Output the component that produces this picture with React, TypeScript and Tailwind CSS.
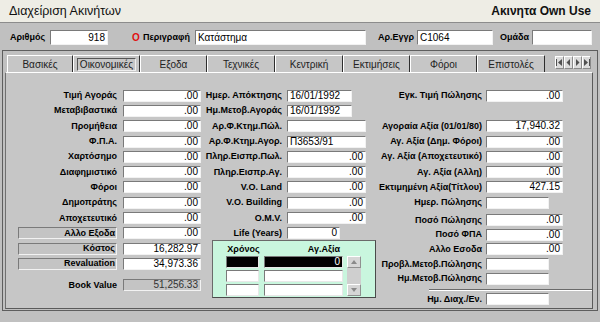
import React from 'react'

const sunken = 'border border-t-[#7a7a7a] border-l-[#7a7a7a] border-b-[#f2f2f2] border-r-[#f2f2f2]'

function Field({ value = '', w, align = 'right', h = 'h-[12px]', bg = 'bg-white', color = 'text-black' }: { value?: string; w: string; align?: 'left' | 'right'; h?: string; bg?: string; color?: string }) {
  return (
    <div className={`${w} ${h} ${bg} ${sunken} flex items-center px-[2px] text-[10px] leading-none ${color} ${align === 'right' ? 'justify-end' : 'justify-start'}`}>
      {value}
    </div>
  )
}

function Label({ text, w, boxed = false }: { text: string; w: string; boxed?: boolean }) {
  if (boxed) {
    return (
      <div className={`${w} flex justify-end`}>
        <div className={`w-[99px] h-[12px] bg-[#c4c4c4] ${sunken} flex items-center justify-end pr-[1px] text-[9px] font-bold leading-none`}>{text}</div>
      </div>
    )
  }
  return <div className={`${w} text-right text-[9px] font-bold leading-none whitespace-nowrap`}>{text}</div>
}

const leftRows: [string, string, boolean?][] = [
  ['Τιμή Αγοράς', '.00'],
  ['Μεταβιβαστικά', '.00'],
  ['Προμήθεια', '.00'],
  ['Φ.Π.Α.', '.00'],
  ['Χαρτόσημο', '.00'],
  ['Διαφημιστικό', '.00'],
  ['Φόροι', '.00'],
  ['Δημοπράτης', '.00'],
  ['Αποχετευτικό', '.00'],
  ['Αλλο Εξοδα', '.00', true],
  ['Κόστος', '16,282.97', true],
  ['Revaluation', '34,973.36', true],
]

const midRows: [string, string, 'left' | 'right', string][] = [
  ['Ημερ. Απόκτησης', '16/01/1992', 'left', 'w-[65px]'],
  ['Ημ.Μετοβ.Αγοράς', '16/01/1992', 'left', 'w-[65px]'],
  ['Αρ.Φ.Κτημ.Πώλ.', '', 'left', 'w-[79px]'],
  ['Αρ.Φ.Κτημ.Αγορ.', 'Π3653/91', 'left', 'w-[79px]'],
  ['Πληρ.Εισπρ.Πωλ.', '.00', 'right', 'w-[79px]'],
  ['Πληρ.Εισπρ.Αγ.', '.00', 'right', 'w-[79px]'],
  ['V.O. Land', '.00', 'right', 'w-[79px]'],
  ['V.O. Building', '.00', 'right', 'w-[79px]'],
  ['O.M.V.', '.00', 'right', 'w-[79px]'],
  ['Life (Years)', '0', 'right', 'w-[53px]'],
]

const rightTop: [string, string | null, string][] = [
  ['Εγκ. Τιμή Πώλησης', '.00', 'w-[77px]'],
  ['', null, ''],
  ['Αγοραία Αξία (01/01/80)', '17,940.32', 'w-[77px]'],
  ['Αγ. Αξία (Δημ. Φόροι)', '.00', 'w-[77px]'],
  ['Αγ. Αξία (Αποχετευτικό)', '.00', 'w-[77px]'],
  ['Αγ. Αξία (Αλλη)', '.00', 'w-[77px]'],
  ['Εκτιμημένη Αξία(Τίτλου)', '427.15', 'w-[77px]'],
  ['Ημερ. Πώλησης', '', 'w-[63px]'],
]

const rightBottom: [string, string, string][] = [
  ['Ποσό Πώλησης', '.00', 'w-[77px]'],
  ['Ποσό ΦΠΑ', '.00', 'w-[77px]'],
  ['Αλλο Εσοδα', '.00', 'w-[77px]'],
  ['Προβλ.Μετοβ.Πώλησης', '', 'w-[63px]'],
  ['Ημ.Μετοβ.Πώλησης', '', 'w-[63px]'],
]

const tabs: [string, string][] = [
  ['Βασικές', 'w-[66px]'],
  ['Οικονομικές', 'w-[67px]'],
  ['Εξοδα', 'w-[67px]'],
  ['Τεχνικές', 'w-[68px]'],
  ['Κεντρική', 'w-[68px]'],
  ['Εκτιμήσεις', 'w-[67px]'],
  ['Φόροι', 'w-[67px]'],
  ['Επιστολές', 'w-[68px]'],
]

function NavBtn({ d }: { d: string }) {
  return (
    <div className="w-[9px] h-[13px] bg-[#dcdcdc] border border-t-white border-l-white border-b-[#8a8a8a] border-r-[#8a8a8a] flex items-center justify-center">
      <svg width="7" height="7" viewBox="0 0 7 7">
        <path d={d} fill="#505050" />
      </svg>
    </div>
  )
}

export default function App() {
  return (
    <div className="w-[600px] h-[322px] bg-[#c0c0c0] text-black font-['Liberation_Sans',Arial,sans-serif] overflow-hidden">
      {/* Title bar */}
      <div className="h-[23px] bg-[#eeede5] border-b border-[#8c8c8c] flex items-center justify-between px-[9px]">
        <span className="text-[12.5px] text-[#111]">Διαχείριση Ακινήτων</span>
        <span className="text-[12px] font-bold text-[#111]">Ακινητα Own Use</span>
      </div>

      {/* Header fields */}
      <div className="h-[27px] flex items-center pl-[10px] pt-[2px]">
        <span className="w-[40px] text-[9px] font-bold">Αριθμός</span>
        <Field value="918" w="w-[58px]" h="h-[15px]" />
        <span className="ml-[24px] w-[11px] text-[10px] font-bold text-[#e01010]">O</span>
        <span className="w-[52px] text-[9px] font-bold">Περιγραφή</span>
        <Field value="Κατάστημα" w="w-[171px]" h="h-[15px]" align="left" />
        <span className="ml-[12px] w-[39px] text-[9px] font-bold">Αρ.Εγγρ</span>
        <Field value="C1064" w="w-[76px]" h="h-[15px]" align="left" />
        <span className="ml-[4px] w-[35px] text-center text-[9px] font-bold">Ομάδα</span>
        <Field w="w-[60px]" h="h-[15px]" />
      </div>

      {/* Tab control frame */}
      <div className="ml-[2px] w-[596px] h-[261px] border border-[#5e5e5e]">
        <div className="h-[21px] flex items-end pl-[4px]">
          {tabs.map(([t, w], i) => (
            <div
              key={t}
              className={`${w} h-[17px] bg-[#c6c6c6] border-t border-t-white border-l border-l-white border-r border-r-[#2e2e2e] flex items-center justify-center text-[10px] text-[#222]`}
            >
              {i === 1 ? (
                <span className="w-[59px] h-[13px] border border-t-[#555] border-l-[#555] border-b-[#eee] border-r-[#eee] flex items-center justify-center">{t}</span>
              ) : (
                t
              )}
            </div>
          ))}
          <div className="ml-[10px] mb-[3px] flex">
            <NavBtn d="M0 0h1v7H0zM6 0v7L2 3.5z" />
            <NavBtn d="M5 0v7L1.5 3.5z" />
            <NavBtn d="M2 0v7l3.5-3.5z" />
            <NavBtn d="M1 0v7l4-3.5zM6 0h1v7H6z" />
          </div>
        </div>

        {/* Panel */}
        <div className="ml-[2px] w-[588px] h-[237px] bg-[#c6c6c6] border border-t-white border-l-[#707070] border-r-[#5a5a5a] border-b-[#5a5a5a] flex pt-[15px]">
          {/* Left column */}
          <div className="w-[195px] flex flex-col">
            {leftRows.map(([l, v, boxed]) => (
              <div key={l} className="h-[15.3px] flex items-center">
                <Label text={l} w="w-[111px]" boxed={!!boxed} />
                <div className="ml-[6px]">
                  <Field value={v} w="w-[78px]" />
                </div>
              </div>
            ))}
            <div className="h-[15.3px] mt-[6px] flex items-center">
              <Label text="Book Value" w="w-[111px]" />
              <div className="ml-[6px]">
                <Field value="51,256.33" w="w-[78px]" bg="bg-[#c4c4c4]" color="text-[#333]" />
              </div>
            </div>
          </div>

          {/* Middle column */}
          <div className="w-[175px] flex flex-col">
            {midRows.map(([l, v, a, w]) => (
              <div key={l} className="h-[15.3px] flex items-center">
                <Label text={l} w="w-[81px]" />
                <div className="ml-[5px]">
                  <Field value={v} w={w} align={a} />
                </div>
              </div>
            ))}
            <div className="ml-[11px] -mt-[1px] w-[164px] h-[58px] bg-[#c9f6de] border border-t-[#6a6a6a] border-l-[#6a6a6a] border-b-[#4a4a4a] border-r-[#4a4a4a]">
              <div className="flex h-[14px] items-end pb-[1px] text-[9px] font-bold leading-none">
                <span className="ml-[14px] w-[33px] text-center">Χρόνος</span>
                <span className="ml-[5px] w-[79px] text-right pr-[4px]">Αγ.Αξία</span>
              </div>
              <div className="flex mt-[1px]">
                <div className="flex flex-col gap-[2px] ml-[13px]">
                  {[0, 1, 2].map(r => (
                    <div key={r} className="flex gap-[5px]">
                      <div className={`w-[33px] h-[12px] border border-t-[#7a7a7a] border-l-[#7a7a7a] border-b-[#e8e8e8] border-r-[#e8e8e8] ${r === 0 ? 'bg-black' : 'bg-white'}`} />
                      <div className={`w-[79px] h-[12px] border border-t-[#7a7a7a] border-l-[#7a7a7a] border-b-[#e8e8e8] border-r-[#e8e8e8] flex items-center justify-end px-[2px] text-[10px] leading-none ${r === 0 ? 'bg-black text-white' : 'bg-white'}`}>
                        {r === 0 ? '0' : ''}
                      </div>
                    </div>
                  ))}
                </div>
                <div className="ml-[4px] w-[14px] h-[40px] bg-[#cfcfcf] flex flex-col justify-between">
                  <div className="h-[12px] bg-[#d6d6d6] border border-t-white border-l-white border-b-[#909090] border-r-[#909090] flex items-center justify-center">
                    <svg width="6" height="4" viewBox="0 0 6 4"><path d="M0 4L3 0l3 4z" fill="#8a8a8a" /></svg>
                  </div>
                  <div className="h-[12px] bg-[#d6d6d6] border border-t-white border-l-white border-b-[#909090] border-r-[#909090] flex items-center justify-center">
                    <svg width="6" height="4" viewBox="0 0 6 4"><path d="M0 0l3 4 3-4z" fill="#8a8a8a" /></svg>
                  </div>
                </div>
              </div>
            </div>
          </div>

          {/* Right column */}
          <div className="flex-1 flex flex-col">
            {rightTop.map(([l, v, w], i) => (
              <div key={i} className="h-[15.3px] flex items-center">
                <Label text={l} w="w-[106px]" />
                {v !== null && (
                  <div className="ml-[4px]">
                    <Field value={v} w={w} />
                  </div>
                )}
              </div>
            ))}
            <div className="mt-[2.6px] flex flex-col">
              {rightBottom.map(([l, v, w]) => (
                <div key={l} className="h-[14.6px] flex items-center">
                  <Label text={l} w="w-[106px]" />
                  <div className="ml-[4px]">
                    <Field value={v} w={w} />
                  </div>
                </div>
              ))}
            </div>
            <div className="mt-[3px] ml-[53px] border-t border-t-[#6a6a6a] border-b border-b-white" />
            <div className="mt-[1px] h-[15px] flex items-center">
              <Label text="Ημ. Διαχ./Εν." w="w-[106px]" />
              <div className="ml-[4px]">
                <Field w="w-[63px]" />
              </div>
            </div>
          </div>
        </div>
      </div>
    </div>
  )
}
